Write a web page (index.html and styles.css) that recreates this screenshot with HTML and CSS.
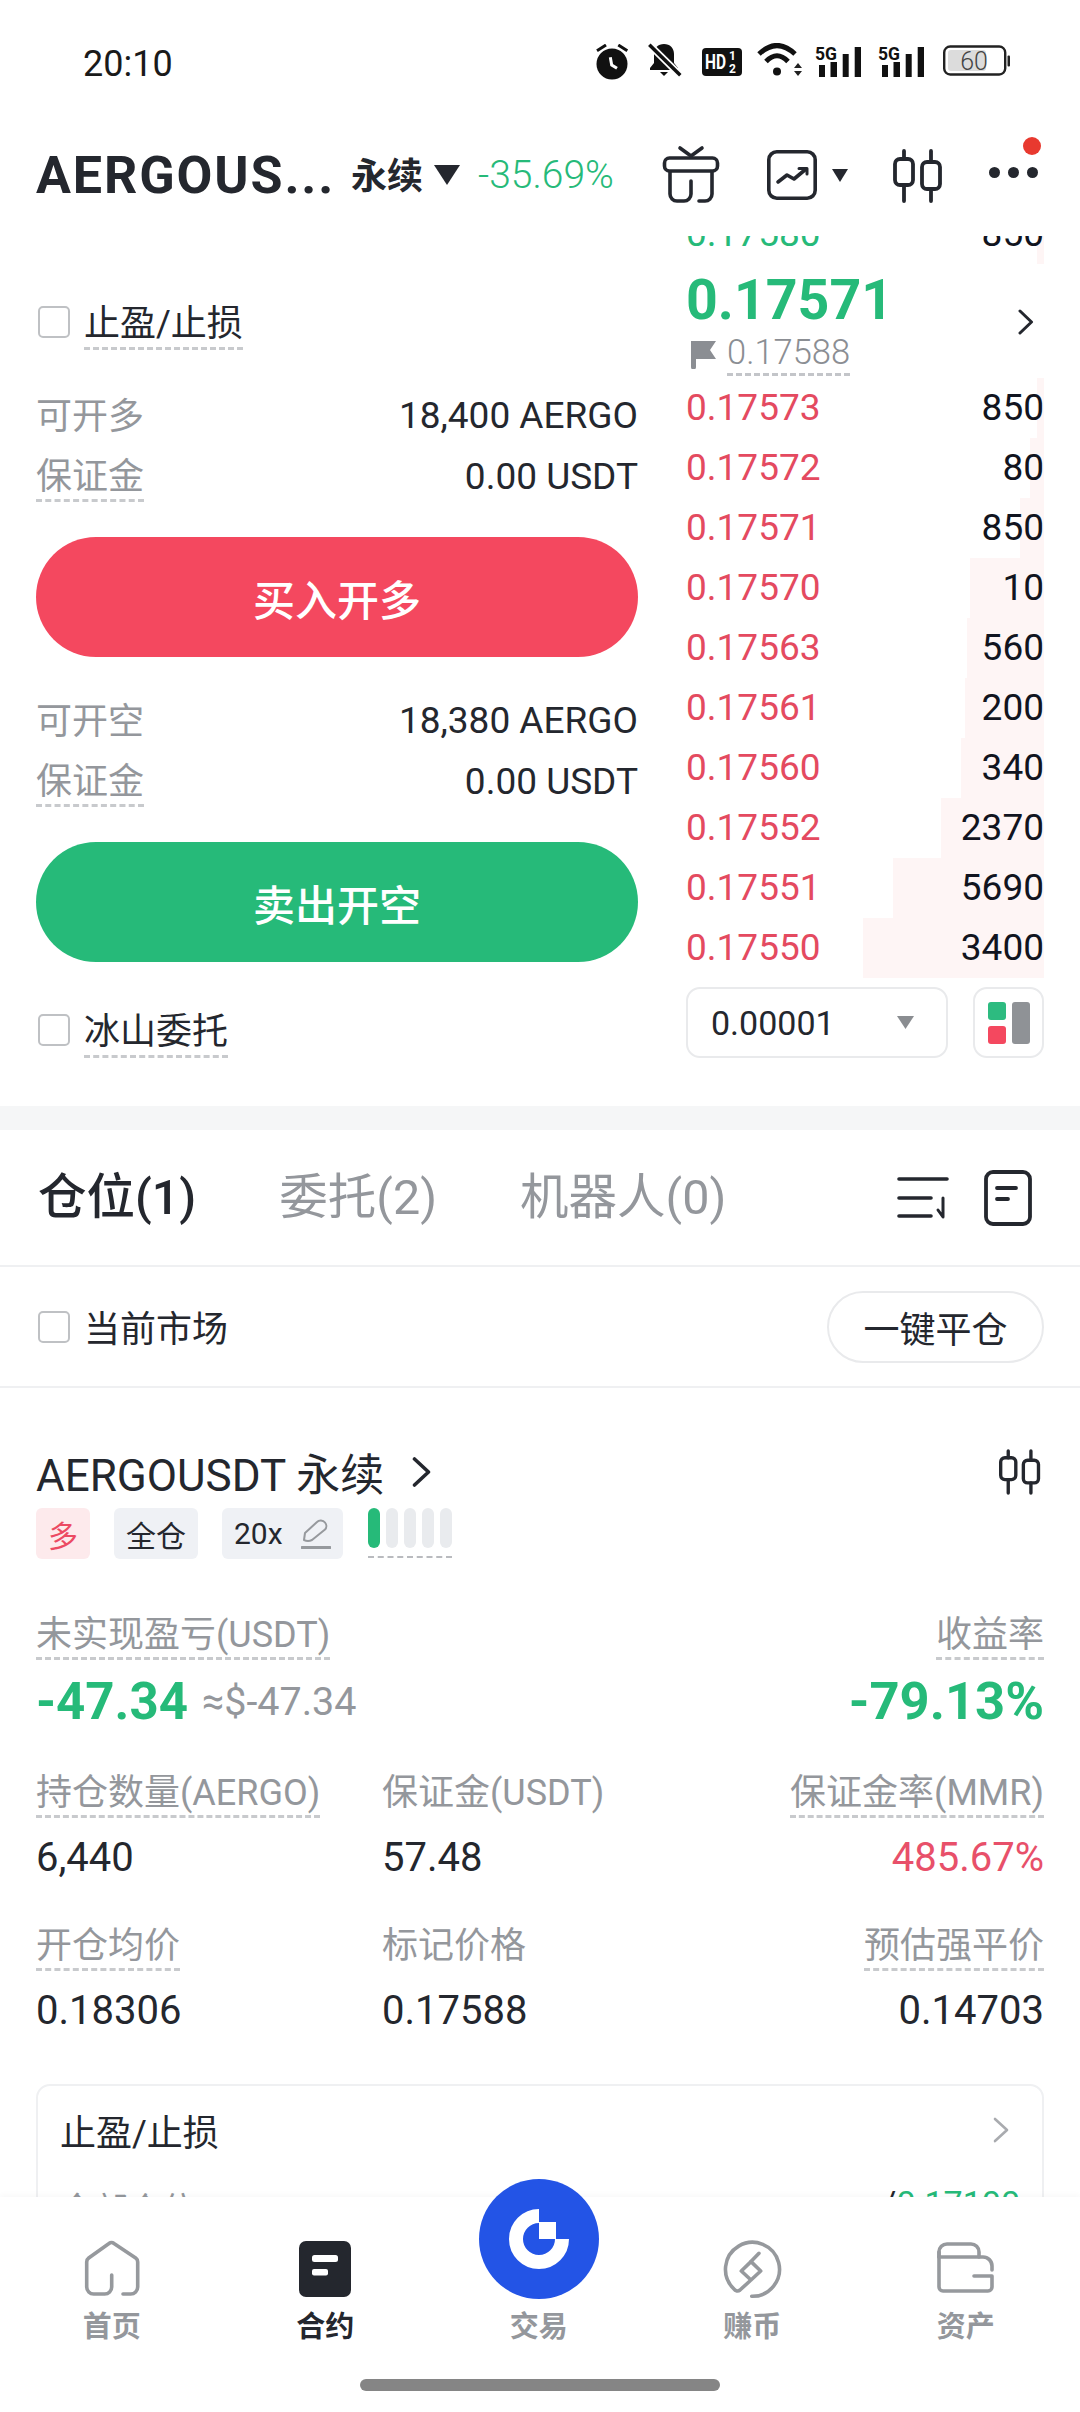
FILE: index.html
```html
<!DOCTYPE html>
<html lang="zh-CN">
<head>
  <meta charset="UTF-8">
  <meta name="viewport" content="width=device-width, initial-scale=1.0">
  <title>AERGOUSDT 永续</title>
  <link rel="stylesheet" href="styles.css">
</head>
<body>
  <div class="page">
    <main class="content">
      <!-- status bar -->
      <div class="status">
        <span class="clock">20:10</span>
        <div class="status-icons">
          <svg class="st-alarm" width="34" height="36" viewBox="0 0 34 36">
            <circle cx="17" cy="20" r="15.5" fill="#111"/>
            <path d="M15.3 13.3L16.7 21L22 24.3" fill="none" stroke="#fff" stroke-width="3"/>
            <path d="M2 6.7L11 1M23.3 1L32.3 6.7" fill="none" stroke="#111" stroke-width="3"/>
          </svg>
          <svg class="st-bell" width="34" height="34" viewBox="0 0 34 34">
            <path d="M16 1c-6 0-10 4-10 10v9l-4 5v2h28v-2l-4-5v-9c0-6-4-10-10-10z" fill="#111"/>
            <path d="M12 29h8l-4 4z" fill="#111"/>
            <path d="M1.3 1.7L32.3 32.3" stroke="#fff" stroke-width="7"/>
            <path d="M1.3 1.7L32.3 32.3" stroke="#111" stroke-width="3.5"/>
          </svg>
          <svg class="st-hd" width="40" height="28" viewBox="0 0 40 28">
            <rect width="40" height="28" rx="4" fill="#111"/>
            <text class="svg-bold" x="3" y="21" font-size="20" fill="#fff" textLength="21" lengthAdjust="spacingAndGlyphs">HD</text>
            <text class="svg-bold" x="27" y="12" font-size="12" fill="#fff">1</text>
            <text class="svg-bold" x="27" y="25" font-size="12" fill="#fff">2</text>
          </svg>
          <svg class="st-wifi" width="46" height="34" viewBox="0 0 46 34">
            <path d="M2 11Q20-6 38 11M9 18.500Q20 7 31 18.500" fill="none" stroke="#111" stroke-width="5"/>
            <circle cx="20" cy="28.500" r="4" fill="#111"/>
            <path d="M37 25L41 20L45 25zM37 28L45 28L41 33z" fill="#222"/>
          </svg>
          <svg class="st-sig" width="46" height="38" viewBox="0 -6 46 38">
            <text class="svg-bold" x="0" y="15" font-size="19" fill="#111" textLength="22" lengthAdjust="spacingAndGlyphs">5G</text>
            <path d="M4 20h6v12H4zM15.5 17h6.500v15h-6.500zM27.700 9h6v23h-6zM39.700 2h6.300v30h-6.300z" fill="#111"/>
          </svg>
          <svg class="st-sig2" width="46" height="38" viewBox="0 -6 46 38">
            <text class="svg-bold" x="0" y="15" font-size="19" fill="#111" textLength="22" lengthAdjust="spacingAndGlyphs">5G</text>
            <path d="M4 20h6v12H4zM15.5 17h6.500v15h-6.500zM27.700 9h6v23h-6zM39.700 2h6.300v30h-6.300z" fill="#111"/>
          </svg>
          <svg class="st-batt" width="68" height="32" viewBox="0 0 68 32">
            <rect x="1.200" y="1.500" width="61" height="28" rx="6" fill="none" stroke="#222" stroke-width="2.400"/>
            <rect x="5" y="5" width="38" height="21" rx="3" fill="#dcdcdc"/>
            <text class="svg-light" x="31" y="25" font-size="25" fill="#444" text-anchor="middle">60</text>
            <rect x="64.500" y="10.500" width="2.500" height="11" rx="1" fill="#222"/>
          </svg>
        </div>
      </div>

      <!-- symbol header -->
      <header class="topbar">
        <span class="symbol">AERGOUS...</span>
        <span class="symbol-type">永续</span>
        <svg class="caret-dark" width="26" height="20" viewBox="0 0 26 20"><path d="M0 0h26L13 20z" fill="#24272e"/></svg>
        <span class="change">-35.69%</span>
        <svg class="ic-gift" width="60" height="60" viewBox="0 0 60 60" fill="none" stroke="#24272e" stroke-width="3.600" stroke-linecap="round" stroke-linejoin="round">
          <path d="M19 3L30 11L41 3"/>
          <rect x="3.500" y="13" width="53" height="13" rx="5"/>
          <path d="M9 27V49a7 7 0 0 0 7 7h7a7 7 0 0 0 7-7V36"/>
          <path d="M51 27V49a7 7 0 0 1-7 7h-6"/>
        </svg>
        <svg class="ic-chart" width="50" height="50" viewBox="0 0 50 50" fill="none" stroke="#24272e" stroke-width="3.600" stroke-linecap="round" stroke-linejoin="round">
          <rect x="1.800" y="1.800" width="46.400" height="46.400" rx="8"/>
          <path d="M11 32L20 25L27 29L39 19"/>
          <path d="M32 18.500H40V24" stroke-width="3"/>
        </svg>
        <svg class="caret-small" width="16" height="13" viewBox="0 0 16 13"><path d="M0 0h16L8 13z" fill="#24272e"/></svg>
        <svg class="ic-candle" width="50" height="54" viewBox="0 0 50 54" fill="none" stroke="#24272e" stroke-width="3.800" stroke-linecap="round" stroke-linejoin="round">
          <path d="M11 2V10M11 36V52M38 2V13M38 40V52"/>
          <rect x="2" y="10" width="18" height="26" rx="5"/>
          <rect x="29" y="13" width="18" height="27" rx="5"/>
        </svg>
        <div class="more">
          <span class="more-dot"></span>
          <span class="more-dot"></span>
          <span class="more-dot"></span>
          <span class="notice"></span>
        </div>
      </header>

      <!-- order form and book -->
      <section class="trade">
        <div class="form-col">
          <div class="check-row check-first">
            <span class="checkbox"></span>
            <span class="dashed check-text">止盈/止损</span>
          </div>
          <div class="info-row"><span class="muted">可开多</span><span class="info-val">18,400 AERGO</span></div>
          <div class="info-row"><span class="muted dashed">保证金</span><span class="info-val">0.00 USDT</span></div>
          <div class="action buy">买入开多</div>
          <div class="info-row info-second"><span class="muted">可开空</span><span class="info-val">18,380 AERGO</span></div>
          <div class="info-row"><span class="muted dashed">保证金</span><span class="info-val">0.00 USDT</span></div>
          <div class="action sell">卖出开空</div>
          <div class="check-row check-last">
            <span class="checkbox"></span>
            <span class="dashed check-text">冰山委托</span>
          </div>
        </div>

        <div class="book-col">
          <div class="book-row book-clipped">
            <span class="bar" style="width:7px"></span>
            <span class="px green">0.17580</span><span class="qty">850</span>
          </div>
          <div class="mid">
            <div class="mid-price">0.17571</div>
            <div class="mark">
              <svg width="26" height="30" viewBox="0 0 26 30"><path d="M1 2h25l-6 9 6 9H6v8a2.500 2.500 0 0 1-5 0z" fill="#8b8e93"/></svg>
              <span class="mark-num">0.17588</span>
            </div>
            <svg class="mid-arrow" width="16" height="26" viewBox="0 0 16 26"><path d="M2 2L13.500 13L2 24" fill="none" stroke="#24272e" stroke-width="3" stroke-linecap="round" stroke-linejoin="round"/></svg>
          </div>
          <div class="book-row"><span class="bar" style="width:7px"></span><span class="px">0.17573</span><span class="qty">850</span></div>
          <div class="book-row"><span class="bar" style="width:14px"></span><span class="px">0.17572</span><span class="qty">80</span></div>
          <div class="book-row"><span class="bar" style="width:24px"></span><span class="px">0.17571</span><span class="qty">850</span></div>
          <div class="book-row"><span class="bar" style="width:74px"></span><span class="px">0.17570</span><span class="qty">10</span></div>
          <div class="book-row"><span class="bar" style="width:77px"></span><span class="px">0.17563</span><span class="qty">560</span></div>
          <div class="book-row"><span class="bar" style="width:79px"></span><span class="px">0.17561</span><span class="qty">200</span></div>
          <div class="book-row"><span class="bar" style="width:83px"></span><span class="px">0.17560</span><span class="qty">340</span></div>
          <div class="book-row"><span class="bar" style="width:103px"></span><span class="px">0.17552</span><span class="qty">2370</span></div>
          <div class="book-row"><span class="bar" style="width:151px"></span><span class="px">0.17551</span><span class="qty">5690</span></div>
          <div class="book-row"><span class="bar" style="width:181px"></span><span class="px">0.17550</span><span class="qty">3400</span></div>
          <div class="book-tools">
            <div class="precision">
              <span>0.00001</span>
              <svg width="17" height="13" viewBox="0 0 17 13"><path d="M0 0h17L8.500 13z" fill="#8a8d91"/></svg>
            </div>
            <div class="layout-btn">
              <svg width="42" height="42" viewBox="0 0 42 42">
                <rect width="18" height="18" rx="3" fill="#2dbb80"/>
                <rect y="24" width="18" height="18" rx="3" fill="#f4485f"/>
                <rect x="24" width="18" height="42" rx="3" fill="#8f9296"/>
              </svg>
            </div>
          </div>
        </div>
      </section>

      <div class="band"></div>

      <!-- positions -->
      <nav class="tabs">
        <span class="tab active">仓位(1)</span>
        <span class="tab">委托(2)</span>
        <span class="tab">机器人(0)</span>
        <svg class="ic-sort" width="52" height="42" viewBox="0 0 52 42" fill="none" stroke="#24272e" stroke-width="3.600" stroke-linecap="round" stroke-linejoin="round">
          <path d="M2 2H50M2 21H34M2 39H34"/>
          <path d="M46 21V40L41 33" stroke-width="3"/>
        </svg>
        <svg class="ic-doc" width="48" height="56" viewBox="0 0 48 56" fill="none" stroke="#24272e" stroke-width="3.800" stroke-linecap="round">
          <rect x="2" y="2" width="44" height="52" rx="7"/>
          <path d="M13 18H32M13 29H24"/>
        </svg>
      </nav>

      <div class="filter">
        <span class="checkbox"></span>
        <span class="check-text">当前市场</span>
        <span class="close-all">一键平仓</span>
      </div>

      <section class="position">
        <div class="pos-title">
          <span>AERGOUSDT 永续</span>
          <svg class="pos-arrow" width="20" height="32" viewBox="0 0 20 32"><path d="M2.500 3L16.500 16L2.500 29" fill="none" stroke="#24272e" stroke-width="3.600" stroke-linecap="round" stroke-linejoin="round"/></svg>
          <svg class="pos-candle" width="42" height="46" viewBox="0 0 50 54" fill="none" stroke="#24272e" stroke-width="4" stroke-linecap="round" stroke-linejoin="round">
            <path d="M11 2V10M11 36V52M38 2V13M38 40V52"/>
            <rect x="2" y="10" width="18" height="26" rx="5"/>
            <rect x="29" y="13" width="18" height="27" rx="5"/>
          </svg>
        </div>
        <div class="tags">
          <span class="tag tag-long">多</span>
          <span class="tag">全仓</span>
          <span class="tag tag-lev">20x
            <svg width="30" height="30" viewBox="0 0 30 30" fill="none" stroke="#96999d" stroke-width="2" stroke-linejoin="round">
              <path d="M3 21L4 14L16 3C18 1 22 1 24 3.500C26 6 25.500 9 24 10.500L11 21Q7 23 3 21Z"/>
              <path d="M1 28.500H29" stroke-width="3" stroke-linecap="round"/>
            </svg>
          </span>
          <div class="risk">
            <span class="risk-bar on"></span>
            <span class="risk-bar"></span>
            <span class="risk-bar"></span>
            <span class="risk-bar"></span>
            <span class="risk-bar"></span>
          </div>
        </div>

        <div class="pnl">
          <div>
            <div class="stat-label"><span class="dashed">未实现盈亏(USDT)</span></div>
            <div class="pnl-val"><strong>-47.34</strong><span class="pnl-usd">≈$-47.34</span></div>
          </div>
          <div class="align-right">
            <div class="stat-label"><span class="dashed">收益率</span></div>
            <div class="pnl-val"><strong class="roe">-79.13%</strong></div>
          </div>
        </div>

        <div class="stats">
          <div>
            <div class="stat-label"><span class="dashed">持仓数量(AERGO)</span></div>
            <div class="stat-val">6,440</div>
          </div>
          <div>
            <div class="stat-label"><span>保证金(USDT)</span></div>
            <div class="stat-val">57.48</div>
          </div>
          <div class="align-right">
            <div class="stat-label"><span class="dashed">保证金率(MMR)</span></div>
            <div class="stat-val red">485.67%</div>
          </div>
          <div>
            <div class="stat-label"><span class="dashed">开仓均价</span></div>
            <div class="stat-val">0.18306</div>
          </div>
          <div>
            <div class="stat-label"><span>标记价格</span></div>
            <div class="stat-val">0.17588</div>
          </div>
          <div class="align-right">
            <div class="stat-label"><span class="dashed">预估强平价</span></div>
            <div class="stat-val">0.14703</div>
          </div>
        </div>

        <div class="tp-card">
          <div class="tp-head">
            <span>止盈/止损</span>
            <svg width="16" height="26" viewBox="0 0 16 26"><path d="M2 2L14 13L2 24" fill="none" stroke="#a9abaf" stroke-width="2.600" stroke-linecap="round" stroke-linejoin="round"/></svg>
          </div>
          <div class="tp-row">
            <span class="muted">全部仓位</span>
            <span><span class="slash">/</span><span class="green">0.17100</span></span>
          </div>
        </div>
      </section>
    </main>

    <!-- bottom navigation -->
    <footer class="bottom">
      <div class="nav-trade">
        <svg width="120" height="120" viewBox="0 0 120 120">
          <circle cx="60" cy="60" r="60" fill="#2354e6"/>
          <path d="M60 37A23 23 0 1 0 83 60" fill="none" stroke="#fff" stroke-width="14"/>
          <rect x="60" y="43" width="17" height="17" fill="#fff"/>
        </svg>
      </div>
      <div class="nav-items">
        <div class="nav-item">
          <svg width="56" height="56" viewBox="0 0 56 56" fill="none" stroke="#96999d" stroke-width="3.600" stroke-linecap="round" stroke-linejoin="round">
            <path d="M27.700 34V46a7 7 0 0 1-7 7H9.700a7 7 0 0 1-7-7V21a5 5 0 0 1 2-4L25 2.500a4 4 0 0 1 5 0L51.700 17a5 5 0 0 1 2 4V46a7 7 0 0 1-7 7H39"/>
          </svg>
          <span>首页</span>
        </div>
        <div class="nav-item current">
          <svg width="56" height="56" viewBox="0 0 56 56">
            <rect x="2" width="52" height="56" rx="7" fill="#24272e"/>
            <rect x="15" y="14" width="26" height="7" rx="2.500" fill="#fff"/>
            <rect x="15" y="28" width="16" height="6.500" rx="2" fill="#fff"/>
          </svg>
          <span>合约</span>
        </div>
        <div class="nav-item">
          <div class="nav-gap"></div>
          <span>交易</span>
        </div>
        <div class="nav-item">
          <svg width="60" height="60" viewBox="0 0 60 60" fill="none" stroke="#96999d" stroke-width="3.600" stroke-linecap="round" stroke-linejoin="round">
            <path d="M29.700 57.300A27 27 0 1 0 12 50a4 4 0 0 0 6 1L29 41L38.700 32L29 22.600L19.300 32L29 41"/>
            <path d="M29 22.600L37 14.300"/>
          </svg>
          <span>赚币</span>
        </div>
        <div class="nav-item">
          <svg width="60" height="60" viewBox="0 0 60 60" fill="none" stroke="#96999d" stroke-width="3.600" stroke-linecap="round" stroke-linejoin="round">
            <path d="M3 13V48a4 4 0 0 0 4 4H52a4 4 0 0 0 4-4V37H38"/>
            <path d="M3 18H47a9 9 0 0 1 9 9v4"/>
            <path d="M3 18V13a8 8 0 0 1 8-8H35a8 8 0 0 1 8 8v5"/>
          </svg>
          <span>资产</span>
        </div>
      </div>
      <div class="home-bar"></div>
    </footer>
  </div>
</body>
</html>
```

FILE: styles.css
```css
* { box-sizing: border-box; }
html, body { margin: 0; padding: 0; background: #fff; }
body { font-family: Roboto, "Noto Sans CJK SC", sans-serif; color: #24272e; }
svg { display: block; flex: none; }

.page { width: 1080px; height: 2412px; overflow: hidden; position: relative; }
.content { height: 2197px; overflow: hidden; }

.green { color: #26ba79; }
.red { color: #e8506a; }
.muted { color: #94979c; }
.dashed { border-bottom: 3px dashed #c8cacd; }
.align-right { text-align: right; }
.svg-bold { font-family: Roboto, sans-serif; font-weight: 700; }
.svg-light { font-family: Roboto, sans-serif; font-weight: 300; }

/* status bar */
.status { height: 124px; display: flex; align-items: center; padding: 0 69px 0 83px; }
.clock { font-size: 36px; color: #1a1a1a; margin-top: 3px; }
.status-icons { margin-left: auto; display: flex; align-items: center; height: 40px; }
.st-bell { margin-left: 19px; margin-top: -4px; }
.st-hd { margin-left: 20px; }
.st-wifi { margin-left: 15px; margin-top: -4px; }
.st-sig { margin-left: 12px; margin-top: -8px; }
.st-sig2 { margin-left: 17px; margin-top: -8px; }
.st-batt { margin-left: 19px; margin-top: -2px; }

/* symbol header */
.topbar { height: 112px; display: flex; align-items: center; padding: 0 0 10px 36px; }
.symbol { width: 315px; font-size: 52px; font-weight: 700; letter-spacing: 1.9px; white-space: nowrap; }
.symbol-type { width: 83px; font-size: 36px; font-weight: 700; margin-top: -4px; }
.change { width: 138px; margin-left: 18px; font-size: 39px; font-weight: 300; color: #26ba79; white-space: nowrap; }
.ic-gift { margin-left: 45px; }
.ic-chart { margin-left: 46px; }
.caret-small { margin-left: 15px; }
.ic-candle { margin-left: 45px; margin-top: 2px; }
.more { margin-left: 46px; position: relative; display: flex; gap: 8px; margin-top: -6px; }
.more-dot { width: 11px; height: 11px; border-radius: 50%; background: #24272e; }
.notice { position: absolute; right: -3px; top: -30px; width: 18px; height: 18px; border-radius: 50%; background: #e8392f; }

/* order form and book */
.trade { height: 870px; display: flex; overflow: hidden; }
.form-col { width: 686px; padding: 0 48px 0 36px; flex: none; }
.checkbox { width: 32px; height: 32px; border: 2px solid #bfc1c4; border-radius: 5px; flex: none; margin-left: 2px; }
.check-row { height: 50px; display: flex; align-items: center; font-size: 36px; }
.check-first { margin-top: 61px; }
.check-last { margin-top: 43px; }
.check-text { margin-left: 14px; margin-top: 6px; line-height: 46px; font-size: 36px; }
.info-row { height: 61px; display: flex; align-items: center; justify-content: space-between; font-size: 36px; }
.check-first + .info-row { margin-top: 38px; }
.info-row .muted { margin-top: -6px; }
.info-row .dashed { line-height: 44px; margin-top: 4px; }
.info-val { font-size: 37px; }
.info-second { margin-top: 33px; }
.action { height: 120px; margin-top: 30px; border-radius: 60px; color: #fff; font-size: 42px; font-weight: 500; display: flex; align-items: center; justify-content: center; }
.buy { background: #f4485f; }
.sell { background: #26ba79; }

.book-col { width: 358px; flex: none; }
.book-row { height: 60px; position: relative; display: flex; align-items: center; justify-content: space-between; font-size: 37px; }
.book-clipped { margin-top: -32px; }
.bar { position: absolute; right: 0; top: 0; bottom: 0; background: #fef5f5; }
.px { position: relative; margin-top: -1px; color: #e44a60; }
.px.green { color: #26ba79; }
.qty { position: relative; margin-top: -1px; color: #111420; }
.mid { height: 114px; position: relative; }
.mid-price { padding-top: 7px; font-size: 55.5px; line-height: 60px; font-weight: 700; color: #26ba79; }
.mark { display: flex; align-items: center; margin: 0 0 0 4px; gap: 11px; font-size: 34.5px; font-weight: 300; color: #8b8e93; }
.mark-num { line-height: 42px; border-bottom: 3px dashed #c3c5c9; }
.mid-arrow { position: absolute; right: 10px; top: 45px; }
.book-tools { margin-top: 9px; display: flex; justify-content: space-between; }
.precision { width: 262px; height: 71px; border: 2px solid #e9eaec; border-radius: 14px; display: flex; align-items: center; justify-content: space-between; padding: 0 32px 0 23px; font-size: 34px; }
.layout-btn { width: 71px; height: 71px; border: 2px solid #e9eaec; border-radius: 14px; display: flex; align-items: center; justify-content: center; }

.band { height: 24px; background: #f5f6f7; }

/* positions */
.tabs { height: 137px; display: flex; align-items: center; padding: 0 48px 0 38px; border-bottom: 2px solid #eff0f2; }
.tab { font-size: 48.5px; color: #94979c; margin-right: 83px; margin-top: -10px; white-space: nowrap; }
.tab.active { color: #24272e; font-weight: 500; }
.ic-sort { margin-left: auto; }
.ic-doc { margin-left: 35px; }

.filter { height: 121px; display: flex; align-items: center; padding: 0 36px; border-bottom: 2px solid #eff0f2; font-size: 36px; }
.close-all { margin-left: auto; width: 217px; height: 72px; border: 2px solid #e9eaec; border-radius: 36px; display: flex; align-items: center; justify-content: center; font-size: 36px; }

.position { padding: 59px 36px 0; }
.pos-title { height: 50px; display: flex; align-items: center; font-size: 44px; }
.pos-arrow { margin-left: 28px; }
.pos-candle { margin-left: auto; margin-right: 3px; }
.tags { margin-top: 11px; height: 51px; display: flex; }
.tag { height: 51px; padding: 0 12px; margin-right: 24px; background: #eff1f5; border-radius: 6px; display: flex; align-items: center; font-size: 30px; }
.tag-lev { gap: 18px; }
.tag-long { background: #fdeaec; color: #ec4a63; }
.risk { display: flex; gap: 6px; height: 50px; padding-bottom: 8px; border-bottom: 2px dashed #b9bbbf; margin-left: 1px; }
.risk-bar { width: 12px; border-radius: 6px; background: #e9ebee; }
.risk-bar.on { background: #26ba79; }

.pnl { margin-top: 55px; display: flex; justify-content: space-between; }
.stat-label { height: 46px; font-size: 36px; line-height: 43px; color: #94979c; }
.stat-label span { display: inline-block; height: 46px; }
.pnl-val { margin-top: 11px; height: 60px; display: flex; align-items: center; justify-content: flex-start; }
.align-right .pnl-val { justify-content: flex-end; }
.pnl-val strong { font-size: 51px; font-weight: 700; color: #26ba79; }
.pnl-val .roe { font-size: 52.5px; }
.pnl-usd { margin-left: 14px; font-size: 39.500px; color: #94979c; }

.stats { margin-top: 41px; display: grid; grid-template-columns: 346px 1fr auto; row-gap: 42px; }
.stat-val { margin-top: 15px; height: 50px; line-height: 50px; font-size: 40px; }

.tp-card { margin-top: 48px; height: 300px; border: 2px solid #eff0f2; border-radius: 14px; padding: 0 22px; }
.tp-head { height: 88px; display: flex; align-items: center; justify-content: space-between; font-size: 36px; padding-right: 11px; }
.tp-row { margin-top: 9px; display: flex; justify-content: space-between; font-size: 34px; }
.slash { color: #24272e; }

/* bottom navigation */
.bottom { height: 215px; background: #fff; position: relative; box-shadow: 0 -2px 6px rgba(0, 0, 0, 0.03); }
.nav-trade { position: absolute; left: 479px; top: -18px; }
.nav-trade::before { content: ""; position: absolute; left: -14px; top: -14px; width: 148px; height: 148px; border-radius: 50%; background: #fff; z-index: -1; }
.nav-items { display: grid; grid-template-columns: repeat(5, 213.5px); padding: 42px 0 0 5px; }
.nav-item { display: flex; flex-direction: column; align-items: center; font-size: 29px; font-weight: 700; color: #94979c; }
.nav-item svg, .nav-gap { height: 60px; }
.nav-item span { margin-top: 10px; line-height: 36px; }
.nav-item.current { color: #24272e; }
.home-bar { width: 360px; height: 12px; margin: 34px auto 0; border-radius: 6px; background: #858585; }
```
